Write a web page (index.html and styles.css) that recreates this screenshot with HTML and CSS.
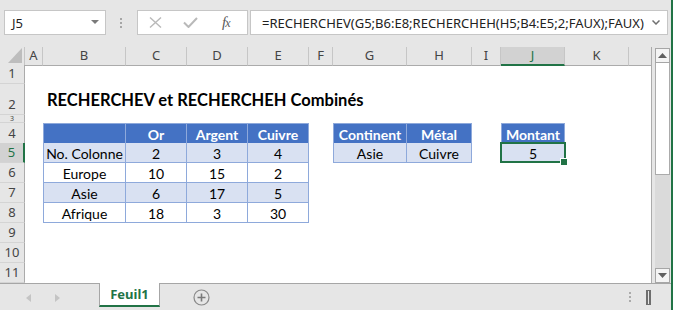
FILE: index.html
```html
<!DOCTYPE html>
<html lang="fr">
<head>
    <meta charset="UTF-8">
    <title>RECHERCHEV et RECHERCHEH Combinés</title>
    <link rel="stylesheet" href="styles.css">
</head>
<body>
    <div class="app">
        <!-- barre de formule -->
        <div class="fbar">
            <div class="namebox">
                <span>J5</span>
                <svg width="8" height="5" viewBox="0 0 8 5"><polygon points="0,0 8,0 4,4" fill="#7a7a7a"/></svg>
            </div>
            <div class="grip">
                <svg width="3" height="11" viewBox="0 0 3 11"><rect x="0" y="0" width="2" height="2" fill="#a6a6a6"/><rect x="0" y="4" width="2" height="2" fill="#a6a6a6"/><rect x="0" y="8" width="2" height="2" fill="#a6a6a6"/></svg>
            </div>
            <div class="fbtns">
                <svg class="ico-x" width="13" height="11" viewBox="0 0 13 11"><path d="M1 0.5 L12 10.5 M12 0.5 L1 10.5" stroke="#b9b9b9" stroke-width="1.4" fill="none"/></svg>
                <svg class="ico-ok" width="15" height="11" viewBox="0 0 15 11"><path d="M1 5.5 L5.5 10 L14 1" stroke="#b9b9b9" stroke-width="2" fill="none"/></svg>
                <span class="fx"><i>f</i><i class="x">x</i></span>
            </div>
            <div class="finput">
                <span>=RECHERCHEV(G5;B6:E8;RECHERCHEH(H5;B4:E5;2;FAUX);FAUX)</span>
                <svg width="8" height="5" viewBox="0 0 8 5"><path d="M0.5 0.5 L4 4 L7.5 0.5" stroke="#707070" stroke-width="1.5" fill="none"/></svg>
            </div>
        </div>

        <div class="main">
            <div class="sheet">
                <div class="row colhead">
                    <div class="corner">
                        <svg width="14" height="15" viewBox="0 0 14 15"><polygon points="14,0 14,15 0,15" fill="#bdbdbd"/></svg>
                    </div>
                    <div class="ch">A</div>
                    <div class="ch">B</div>
                    <div class="ch">C</div>
                    <div class="ch">D</div>
                    <div class="ch">E</div>
                    <div class="ch">F</div>
                    <div class="ch">G</div>
                    <div class="ch">H</div>
                    <div class="ch">I</div>
                    <div class="ch active">J</div>
                    <div class="ch">K</div>
                    <div class="ch last"></div>
                </div>

                <div class="row h19"><div class="rh">1</div></div>
                <div class="row h31">
                    <div class="rh">2</div>
                    <div class="title">RECHERCHEV et RECHERCHEH Combinés</div>
                </div>
                <div class="row h8"><div class="rh small">3</div></div>

                <div class="row h20">
                    <div class="rh">4</div>
                    <div class="c cB t tl hd"></div>
                    <div class="c cC t hd">Or</div>
                    <div class="c cD t hd">Argent</div>
                    <div class="c cE t hd">Cuivre</div>
                    <div class="c cG t tl hd">Continent</div>
                    <div class="c cH t hd">Métal</div>
                    <div class="c cJ t tl hd">Montant</div>
                </div>
                <div class="row h20">
                    <div class="rh active">5</div>
                    <div class="c cB t tl bd">No. Colonne</div>
                    <div class="c cC t bd">2</div>
                    <div class="c cD t bd">3</div>
                    <div class="c cE t bd">4</div>
                    <div class="c cG t tl bd">Asie</div>
                    <div class="c cH t bd">Cuivre</div>
                    <div class="c cJ t tl bd sel">5</div>
                </div>
                <div class="row h20">
                    <div class="rh">6</div>
                    <div class="c cB t tl">Europe</div>
                    <div class="c cC t">10</div>
                    <div class="c cD t">15</div>
                    <div class="c cE t">2</div>
                </div>
                <div class="row h20">
                    <div class="rh">7</div>
                    <div class="c cB t tl bd">Asie</div>
                    <div class="c cC t bd">6</div>
                    <div class="c cD t bd">17</div>
                    <div class="c cE t bd">5</div>
                </div>
                <div class="row h20">
                    <div class="rh">8</div>
                    <div class="c cB t tl">Afrique</div>
                    <div class="c cC t">18</div>
                    <div class="c cD t">3</div>
                    <div class="c cE t">30</div>
                </div>
                <div class="row h20"><div class="rh">9</div></div>
                <div class="row h20"><div class="rh">10</div></div>
                <div class="row h20"><div class="rh">11</div></div>
            </div>

            <div class="vscroll">
                <div class="sbtn">
                    <svg width="9" height="5" viewBox="0 0 9 5"><polygon points="0,5 9,5 4.5,0" fill="#606060"/></svg>
                </div>
                <div class="thumb"></div>
                <div class="track"></div>
                <div class="sbtn">
                    <svg width="9" height="5" viewBox="0 0 9 5"><polygon points="0,0 9,0 4.5,5" fill="#606060"/></svg>
                </div>
            </div>
        </div>

        <!-- onglets -->
        <div class="tabs">
            <div class="nav">
                <svg width="5" height="8" viewBox="0 0 5 8"><polygon points="5,0 5,8 0,4" fill="#c4c4c4"/></svg>
                <svg width="5" height="8" viewBox="0 0 5 8"><polygon points="0,0 0,8 5,4" fill="#c4c4c4"/></svg>
            </div>
            <div class="tab">Feuil1</div>
            <div class="addsheet">
                <svg width="17" height="17" viewBox="0 0 17 17"><circle cx="8.5" cy="8.5" r="7.5" stroke="#8a8a8a" stroke-width="1.2" fill="none"/><path d="M8.5 4.5 V12.5 M4.5 8.5 H12.5" stroke="#7a7a7a" stroke-width="1.6"/></svg>
            </div>
            <div class="spacer"></div>
            <svg class="tdots" width="3" height="11" viewBox="0 0 3 11"><rect x="0" y="0" width="2" height="2" fill="#ababab"/><rect x="0" y="4" width="2" height="2" fill="#ababab"/><rect x="0" y="8" width="2" height="2" fill="#ababab"/></svg>
            <svg class="split" width="5" height="15" viewBox="0 0 5 15"><rect x="0" y="0" width="5" height="15" fill="#6e6e6e"/><rect x="2" y="1" width="1" height="13" fill="#e6e6e6"/></svg>
        </div>
    </div>
</body>
</html>
```

FILE: styles.css
```css
* {
    box-sizing: border-box;
    margin: 0;
    padding: 0;
}

body {
    width: 673px;
    height: 310px;
    overflow: hidden;
    background-color: #e6e6e6;
    font-family: "Noto Sans", sans-serif;
}

.app {
    height: 310px;
    border-right: 2px solid #217346;
    display: flex;
    flex-direction: column;
}

/* barre de formule */
.fbar {
    height: 47px;
    display: flex;
    align-items: flex-start;
    padding: 10px 0 0 4px;
}

.namebox {
    width: 102px;
    height: 25px;
    background: white;
    border: 1px solid #c6c6c6;
    display: flex;
    align-items: center;
    justify-content: space-between;
    padding: 0 6px 0 7px;
    font-size: 13px;
    color: #222;
}

.grip {
    width: 31px;
    display: flex;
    justify-content: center;
    padding-top: 8px;
}

.fbtns {
    width: 111px;
    height: 25px;
    background: white;
    border: 1px solid #c6c6c6;
    display: flex;
    align-items: center;
    padding-left: 11px;
}

.ico-ok {
    margin-left: 21px;
}

.fx {
    margin-left: 24px;
    font-family: "Liberation Serif", serif;
    font-size: 15px;
    color: #5a5a5a;
    letter-spacing: -1px;
}

.fx .x {
    font-size: 12px;
}

.finput {
    margin-left: 2px;
    width: 418px;
    height: 25px;
    background: white;
    border: 1px solid #c6c6c6;
    display: flex;
    align-items: center;
    justify-content: space-between;
    padding: 0 7px 0 11px;
    font-size: 13px;
    color: #222;
    white-space: nowrap;
}

/* feuille */
.main {
    display: flex;
    height: 236px;
}

.sheet {
    width: 651px;
    background: white;
}

.row {
    display: grid;
    grid-template-columns: 25px 18px 83px 61px 61px 61px 24px 74px 65px 29px 64px 64px 22px;
}

.colhead { height: 18px; }
.h19 { height: 19px; }
.h31 { height: 31px; }
.h8 { height: 8px; }
.h20 { height: 20px; }

.corner {
    background: #e6e6e6;
    border-right: 1px solid #c6c6c6;
    border-bottom: 1px solid #ababab;
    display: flex;
    justify-content: flex-end;
    align-items: flex-end;
    padding: 0 2px 2px 0;
}

.ch {
    background: #e6e6e6;
    border-right: 1px solid #c6c6c6;
    border-bottom: 1px solid #ababab;
    font-size: 13px;
    line-height: 17px;
    text-align: center;
    color: #444;
}

.ch.last {
    border-right: none;
}

.ch.active {
    background: #d2d2d2;
    border-bottom: 2px solid #217346;
    color: #217346;
}

.rh {
    grid-column: 1;
    background: #e6e6e6;
    border-right: 1px solid #ababab;
    border-bottom: 1px solid #d4d4d4;
    font-size: 13px;
    color: #444;
    text-align: center;
    display: flex;
    align-items: flex-end;
    justify-content: center;
    padding-bottom: 1px;
    overflow: hidden;
}

.rh.small {
    font-size: 7px;
    line-height: 7px;
    padding-bottom: 0;
}

.rh.active {
    background: #d2d2d2;
    border-right: 2px solid #217346;
    color: #217346;
}

.title {
    grid-column: 3 / span 8;
    align-self: end;
    padding: 0 0 5px 4px;
    font-family: Lato, sans-serif;
    font-weight: bold;
    font-size: 16.5px;
    white-space: nowrap;
    color: #000;
}

.c {
    display: flex;
    align-items: center;
    justify-content: center;
    padding-top: 2px;
    font-family: Lato, sans-serif;
    font-size: 14px;
    color: #000;
    white-space: nowrap;
}

.cB { grid-column: 3; }
.cC { grid-column: 4; }
.cD { grid-column: 5; }
.cE { grid-column: 6; }
.cG { grid-column: 8; }
.cH { grid-column: 9; }
.cJ { grid-column: 11; }

.t {
    border-right: 1px solid #8ea9db;
    border-bottom: 1px solid #8ea9db;
}

.tl {
    border-left: 1px solid #8ea9db;
}

.hd {
    background: #4472c4;
    color: white;
    font-weight: bold;
    border-top: 1px solid #8ea9db;
}

.bd {
    background: #d9e1f2;
}

.sel {
    position: relative;
}

.sel::after {
    content: "";
    position: absolute;
    left: -2px;
    top: -1px;
    right: -2px;
    bottom: -1px;
    border: 2px solid #217346;
}

.sel::before {
    content: "";
    position: absolute;
    right: -4px;
    bottom: -4px;
    width: 6px;
    height: 6px;
    background: #217346;
    border: 1px solid white;
    z-index: 1;
}

/* barre de défilement */
.vscroll {
    width: 20px;
    border-left: 1px solid #ababab;
    background: #e6e6e6;
    display: flex;
    flex-direction: column;
    align-items: center;
    padding: 1px 0 0 2px;
}

.sbtn {
    width: 15px;
    height: 15px;
    background: #f4f4f4;
    border: 1px solid #a6a6a6;
    display: flex;
    align-items: center;
    justify-content: center;
}

.thumb {
    width: 15px;
    height: 112px;
    background: white;
    border: 1px solid #ababab;
    border-top: none;
}

.track {
    flex: 1;
    width: 15px;
    background: #dadada;
}

/* onglets */
.tabs {
    height: 27px;
    border-top: 1px solid #a6a6a6;
    display: flex;
    align-items: flex-start;
}

.nav {
    width: 99px;
    display: flex;
    gap: 24px;
    padding: 10px 0 0 26px;
}

.tab {
    width: 61px;
    height: 24px;
    background: white;
    border-left: 1px solid #a6a6a6;
    border-right: 1px solid #a6a6a6;
    border-bottom: 2px solid #217346;
    margin-top: -1px;
    text-align: center;
    font-weight: bold;
    font-size: 13px;
    line-height: 23px;
    color: #217346;
}

.addsheet {
    margin: 5px 0 0 33px;
}

.spacer {
    flex: 1;
}

.tdots {
    margin: 8px 14px 0 0;
}

.split {
    margin: 6px 20px 0 0;
}
```
